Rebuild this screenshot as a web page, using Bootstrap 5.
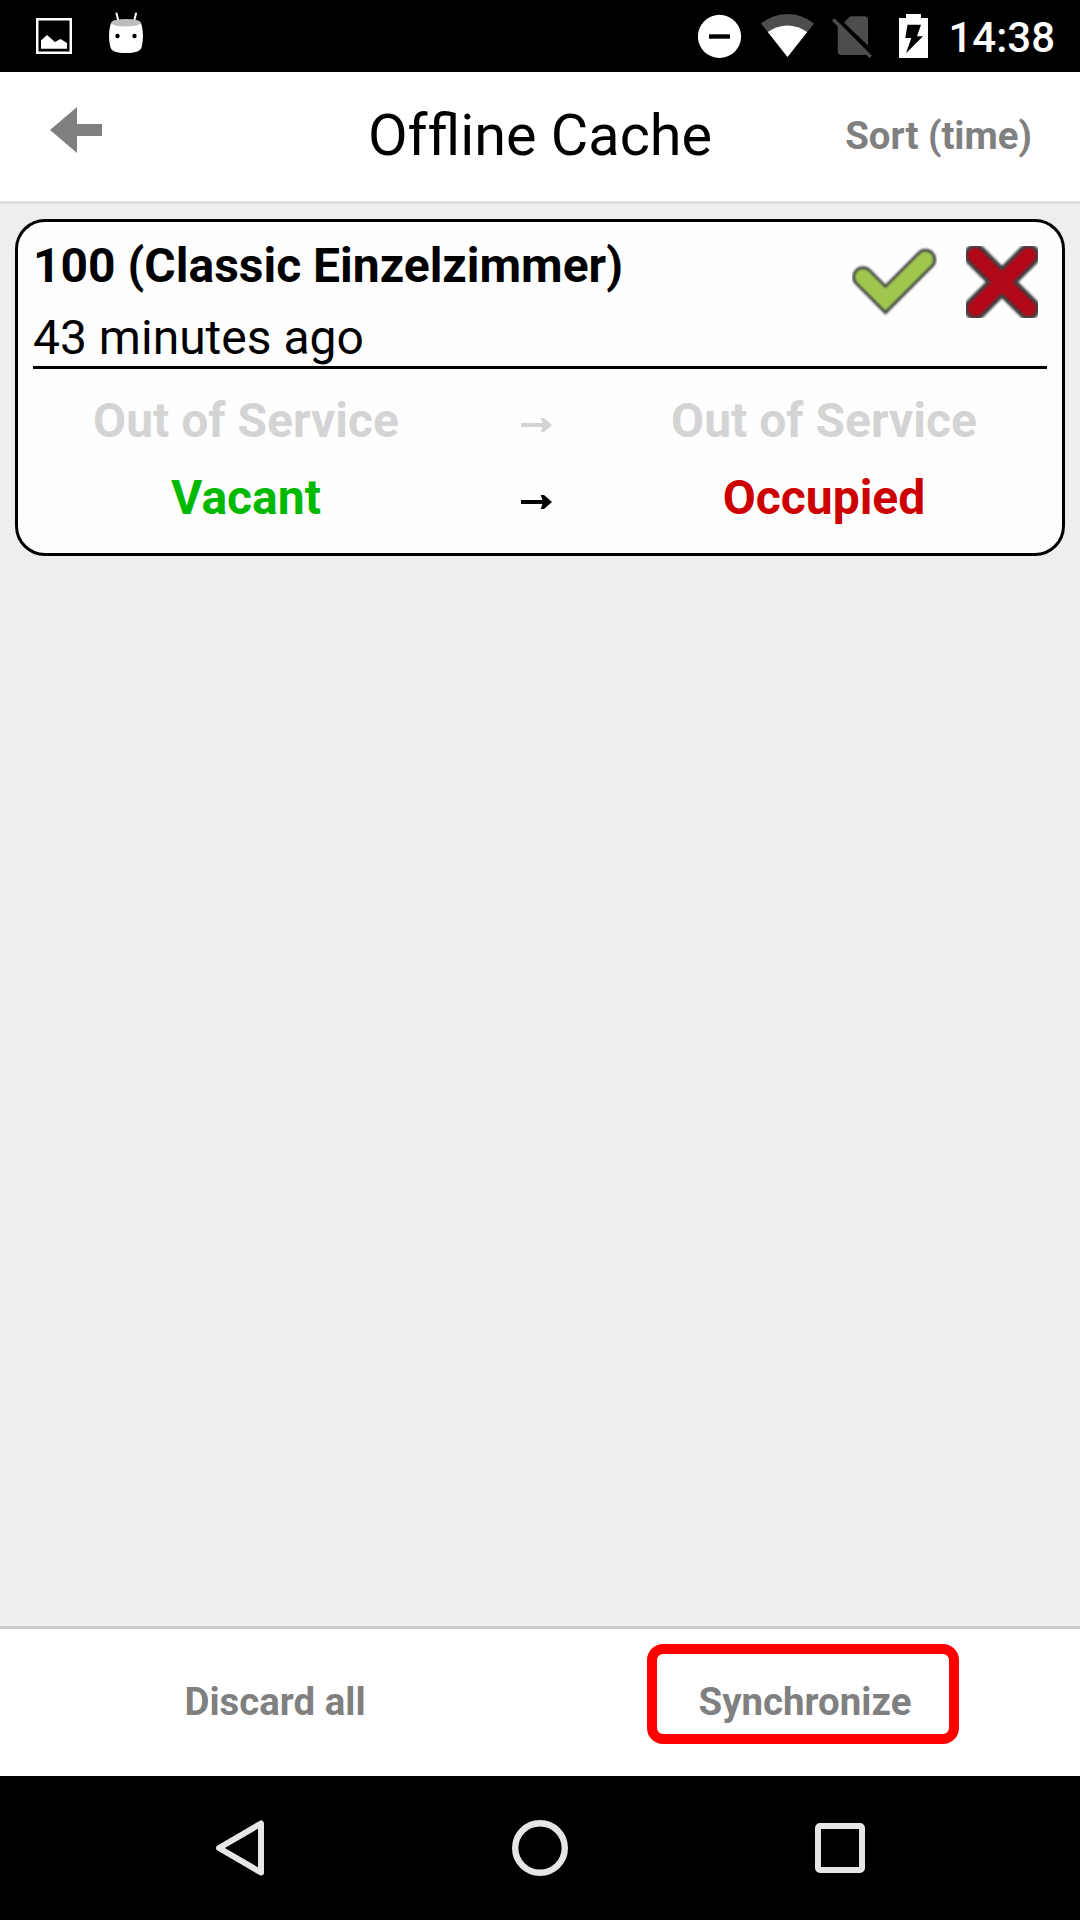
<!DOCTYPE html>
<html lang="en">
<head>
<meta charset="utf-8">
<meta name="viewport" content="width=device-width, initial-scale=1">
<title>Offline Cache</title>
<link href="https://cdn.jsdelivr.net/npm/bootstrap@5.3.0/dist/css/bootstrap.min.css" rel="stylesheet">
<style>
body{font-family:Roboto,"Liberation Sans",sans-serif;background:#eee;color:#000;height:1920px;overflow:hidden}
svg{display:block;flex:none}
.status-bar{height:72px;background:#000;padding:12px 25px 0 36px}
.clock{font-size:42px;font-weight:500;line-height:52px;color:#fff;margin-left:19px}
.app-header{height:132px;border-bottom:3px solid #dcdcdc;padding:0 48px 0 50px;display:grid;grid-template-columns:1fr auto 1fr}
.app-title{font-size:57.6px;font-weight:400;line-height:68px;margin:30px 2px 0 0}
.action-btn{font-size:38.4px;font-weight:700;line-height:46px;color:#808080;padding:0;border:0;border-radius:0}
.action-btn:hover{color:#606060}
.sort-btn{margin-top:41px}
.droid-icon{margin-left:37px}
.wifi-icon{margin-left:18px}
.sim-icon{margin-left:15px}
.battery-icon{margin-left:25px}
.entry-card{margin:15px 15px 0;height:337px;border:3px solid #000;border-radius:30px;padding:8px 15px 0;background:#fefefe;font-size:48px}
.entry-head{height:139px;border-bottom:3px solid #000;line-height:72px}
.entry-name{font-size:48px;line-height:72px;font-weight:700;margin:0}
.entry-tools{gap:29px;padding:16px 9px 0 0}
.soft-edge{filter:blur(1px)}
.change-list{padding-top:13px;line-height:77px}
.change-row{display:grid;grid-template-columns:426px 143px 444px;font-weight:700;text-align:center;align-items:center}
.change-row svg{margin:9px 0 0 62px}
.unchanged{color:#d4d4d4}
.st-vacant{color:#00b900}
.st-occupied{color:#cd0000}
.app-footer{height:150px;border-top:3px solid #ccc;padding:0 10px}
.footer-btn{height:146px}
.highlight-box{left:647px;top:15px;width:312px;height:100px;border:10px solid #f00;border-radius:16px;pointer-events:none}
.nav-keys{height:144px;background:#000;padding:0 215px 0 216px}
</style>
</head>
<body class="d-flex flex-column">

<div class="status-bar d-flex align-items-start">
  <svg width="36" height="42" viewBox="36 12 36 42" aria-hidden="true">
    <path fill="#fff" fill-rule="evenodd" d="M36 18h36v36H36zM38.500 20.500v31h31v-31z"/>
    <path fill="#fff" d="M41 40.500l6-5.500 8 7 5.500-3 6.500 4v5.700H41z"/>
  </svg>
  <svg class="droid-icon" width="34" height="42" viewBox="109 12 34 42" aria-hidden="true">
    <path d="M116.500 13.500l2 8M136 13.500l-2 8" stroke="#fff" stroke-width="2" stroke-linecap="round"/>
    <path fill="#fff" d="M111 23q15 6 30 0c2.500 7 2.500 17 .5 24.500-1.500 4-6 5.500-15.500 5.500s-14-1.500-15.500-5.500c-2-7.500-2-17.500.5-24.500z"/>
    <ellipse cx="126" cy="22.800" rx="14.800" ry="3.800" fill="#bdbdbd"/>
    <circle cx="117.500" cy="36" r="2.200"/><circle cx="134.500" cy="36" r="2.200"/>
  </svg>
  <div class="d-flex ms-auto align-items-start">
    <svg width="44" height="48" viewBox="698 12 44 48" aria-hidden="true"><circle cx="719.500" cy="36.400" r="21.600" fill="#fff"/><path d="M709 34.300h21v4.400h-21z"/></svg>
    <svg class="wifi-icon" width="56" height="48" viewBox="760 12 56 48" aria-hidden="true">
      <path fill="#4d4d4d" d="M761 23.500Q773 14 787.500 14T814 23.500L787.500 57z"/>
      <path fill="#fff" d="M767.800 32Q777 25.500 787.500 25.500T807.200 32L787.500 57z"/>
    </svg>
    <svg class="sim-icon" width="42" height="48" viewBox="831 12 42 48" aria-hidden="true">
      <path fill="#4d4d4d" d="M844 22.500l5.500-5.500q1-.7 2-.7h13q3.500 0 3.500 3.700v25.500zM837.800 24.500L867 53.800q-1 1.200-3 1.200h-22.200q-4 0-4-4zM834.500 18.300L872 55.700l-2.600 2.300L832 20.800z"/>
    </svg>
    <svg class="battery-icon" width="31" height="48" viewBox="898 12 31 48" aria-hidden="true">
      <path fill="#fff" d="M906 14h15v4h7v40h-29V18h7z"/><path d="M907.500 24.700H921l-4 11.600h6l-17 17 5.300-15.300h-6z"/>
    </svg>
    <span class="clock">14:38</span>
  </div>
</div>

<header class="app-header bg-white">
  <a href="#" aria-label="Back" class="pt-4"><svg style="margin-top:11px" width="52" height="46" viewBox="50 107 52 46"><path fill="#808080" d="M50 130l27-23v17h25v12H77v17z"/></svg></a>
  <h1 class="app-title">Of<span class="d-inline-block">fline Cache</span></h1>
  <div class="text-end"><button type="button" class="btn action-btn sort-btn">Sort (time)</button></div>
</header>

<main class="flex-grow-1">
  <section class="entry-card">
    <div class="entry-head d-flex justify-content-between">
      <div>
        <h2 class="entry-name">100 (Classic Einzelzimmer)</h2>
        <div>43 minutes ago</div>
      </div>
      <div class="entry-tools d-flex">
        <svg width="85" height="72" viewBox="852 246 85 72" role="img" aria-label="Accept">
          <g class="soft-edge" fill="none" stroke-linecap="round">
            <path d="M863 277l22.500 22.500 40-40" stroke="#404043" stroke-width="21.500"/>
            <path d="M863 277l22.500 22.500 40-40" stroke="#9fc750" stroke-width="16"/>
          </g>
        </svg>
        <svg width="72" height="72" viewBox="966 246 72 72" role="img" aria-label="Discard">
          <g class="soft-edge" fill="none" stroke-linecap="round">
            <path d="M975.500 255.500l53 53m0-53l-53 53" stroke="#404043" stroke-width="23"/>
            <path d="M975.500 255.500l53 53m0-53l-53 53" stroke="#b30818" stroke-width="15.500"/>
          </g>
        </svg>
      </div>
    </div>
    <div class="change-list">
      <div class="change-row unchanged">
        <span>Out of Service</span>
        <svg width="31" height="14" viewBox="0 0 31 14" fill="currentColor" role="img" aria-label="to"><path d="M0 5h21.500L19.700 0H23l8 7-8 7h-3.300l1.800-5H0z"/></svg>
        <span>Out of Service</span>
      </div>
      <div class="change-row">
        <span class="st-vacant">Vacant</span>
        <svg width="31" height="14" viewBox="0 0 31 14" fill="currentColor" role="img" aria-label="to"><path d="M0 5h21.500L19.700 0H23l8 7-8 7h-3.300l1.800-5H0z"/></svg>
        <span class="st-occupied">Occupied</span>
      </div>
    </div>
  </section>
</main>

<footer class="app-footer bg-white d-flex position-relative">
  <button type="button" class="btn action-btn footer-btn flex-fill w-50">Discard all</button>
  <button type="button" class="btn action-btn footer-btn flex-fill w-50">Synchronize</button>
  <div class="highlight-box position-absolute"></div>
</footer>

<nav class="nav-keys d-flex justify-content-between align-items-center" aria-label="System">
  <svg width="48" height="56" viewBox="216 1820 48 56"><path d="M261 1823.500v49l-42-24.500z" fill="none" stroke="#e6e6e6" stroke-width="6" stroke-linejoin="round"/></svg>
  <svg width="56" height="56" viewBox="0 0 56 56"><circle cx="28" cy="28" r="24.800" fill="none" stroke="#e6e6e6" stroke-width="6.400"/></svg>
  <svg width="50" height="50" viewBox="0 0 50 50"><rect x="3" y="3" width="44" height="44" rx="2" fill="none" stroke="#e6e6e6" stroke-width="6"/></svg>
</nav>

<script src="https://cdn.jsdelivr.net/npm/bootstrap@5.3.0/dist/js/bootstrap.bundle.min.js"></script>
</body>
</html>
